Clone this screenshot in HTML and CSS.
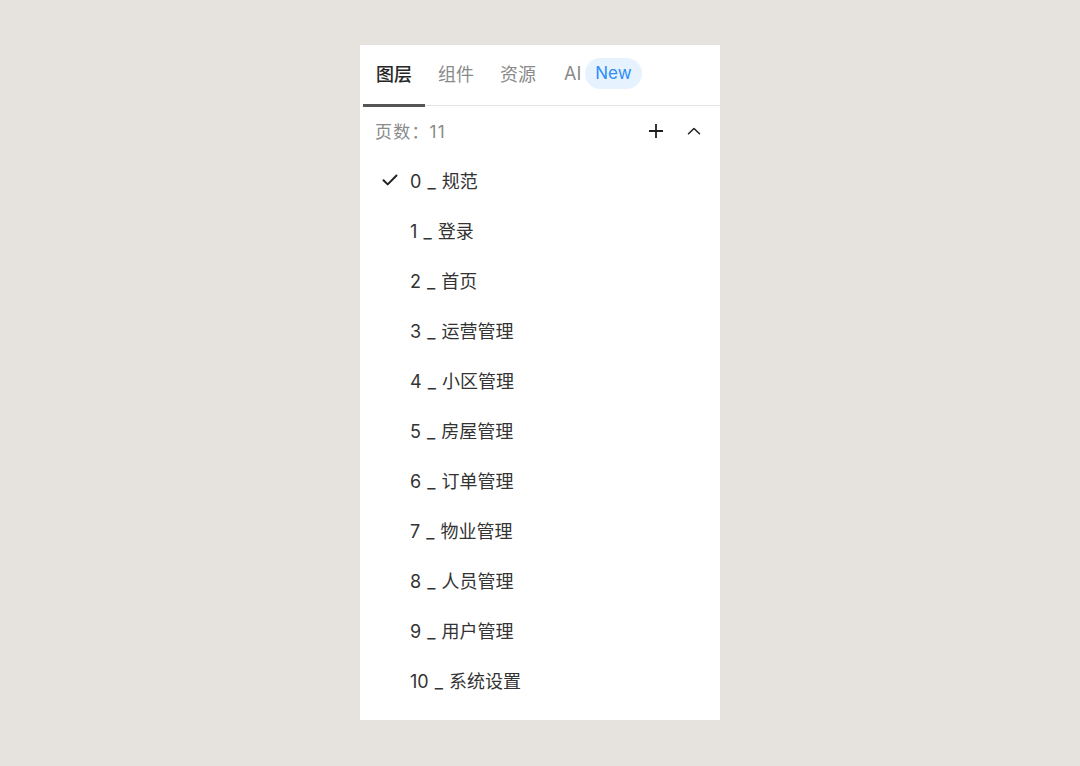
FILE: index.html
```html
<!DOCTYPE html>
<html lang="zh-CN">
<head>
<meta charset="utf-8">
<title>图层</title>
<link rel="stylesheet" href="styles.css">
</head>
<body>
<div class="panel">
  <div class="tabs">
    <div class="tab active">图层</div>
    <div class="tab">组件</div>
    <div class="tab">资源</div>
    <div class="tab tab-ai">AI <span class="pill">New</span></div>
  </div>
  <div class="pages-head">
    <span class="count">页数：11</span>
    <div class="actions">
      <button class="icon-btn" aria-label="add">
        <svg width="16" height="16" viewBox="0 0 16 16"><path d="M8 1v14M1 8h14" stroke="#1f1f1f" stroke-width="1.8" fill="none"/></svg>
      </button>
      <button class="icon-btn" aria-label="collapse">
        <svg width="14" height="8" viewBox="0 0 14 8"><path d="M1.5 6.8L7 1.5l5.5 5.3" stroke="#1f1f1f" stroke-width="1.5" fill="none" stroke-linecap="round" stroke-linejoin="round"/></svg>
      </button>
    </div>
  </div>
  <ul class="pages">
    <li class="page current"><span class="mark"><svg width="16" height="12" viewBox="0 0 16 12"><path d="M1.5 6.2l4.2 4.2L14.5 1.5" stroke="#222" stroke-width="2" fill="none" stroke-linecap="round" stroke-linejoin="round"/></svg></span>0 _ 规范</li>
    <li class="page"><span class="mark"></span>1 _ 登录</li>
    <li class="page"><span class="mark"></span>2 _ 首页</li>
    <li class="page"><span class="mark"></span>3 _ 运营管理</li>
    <li class="page"><span class="mark"></span>4 _ 小区管理</li>
    <li class="page"><span class="mark"></span>5 _ 房屋管理</li>
    <li class="page"><span class="mark"></span>6 _ 订单管理</li>
    <li class="page"><span class="mark"></span>7 _ 物业管理</li>
    <li class="page"><span class="mark"></span>8 _ 人员管理</li>
    <li class="page"><span class="mark"></span>9 _ 用户管理</li>
    <li class="page"><span class="mark"></span>10 _ 系统设置</li>
  </ul>
</div>
</body>
</html>
```

FILE: styles.css
```css
* { box-sizing: border-box; }

html, body {
  margin: 0;
  padding: 0;
  background: #e6e2de;
  font-family: Inter, "Noto Sans CJK SC", sans-serif;
}

.panel {
  width: 360px;
  height: 675px;
  margin: 45px 0 0 360px;
  background: #ffffff;
  display: flex;
  flex-direction: column;
}

.tabs {
  display: flex;
  align-items: stretch;
  height: 61px;
  margin-left: 3px;
  border-bottom: 1px solid #e4e4e4;
}

.tab {
  display: flex;
  align-items: center;
  padding: 0 13px 3px;
  font-size: 18px;
  color: #8a8a8a;
  border-bottom: 3px solid transparent;
  margin-bottom: -2px;
}

.tab.active {
  color: #262626;
  font-weight: 500;
  border-bottom-color: #555555;
}

.tab-ai {
  gap: 4px;
  padding-left: 15px;
}

.pill {
  display: inline-flex;
  align-items: center;
  height: 31px;
  padding: 0 10px;
  border-radius: 16px;
  background: #e7f2ff;
  color: #2c8ef8;
  font-size: 17px;
}

.pages-head {
  display: flex;
  align-items: center;
  justify-content: space-between;
  height: 49px;
  padding: 0 14px 0 15px;
}

.count {
  font-size: 17px;
  letter-spacing: 1.2px;
  color: #8a8a8a;
}

.actions {
  display: flex;
  gap: 14px;
}

.icon-btn {
  width: 24px;
  height: 24px;
  padding: 0;
  border: 0;
  background: none;
  display: flex;
  align-items: center;
  justify-content: center;
}

.pages {
  list-style: none;
  margin: 0;
  padding: 0;
}

.page {
  display: flex;
  align-items: center;
  height: 50px;
  padding-left: 22px;
  padding-bottom: 1px;
  font-size: 18px;
  word-spacing: 1px;
  color: #333333;
}

.mark {
  width: 28px;
  display: flex;
  align-items: center;
}
```
